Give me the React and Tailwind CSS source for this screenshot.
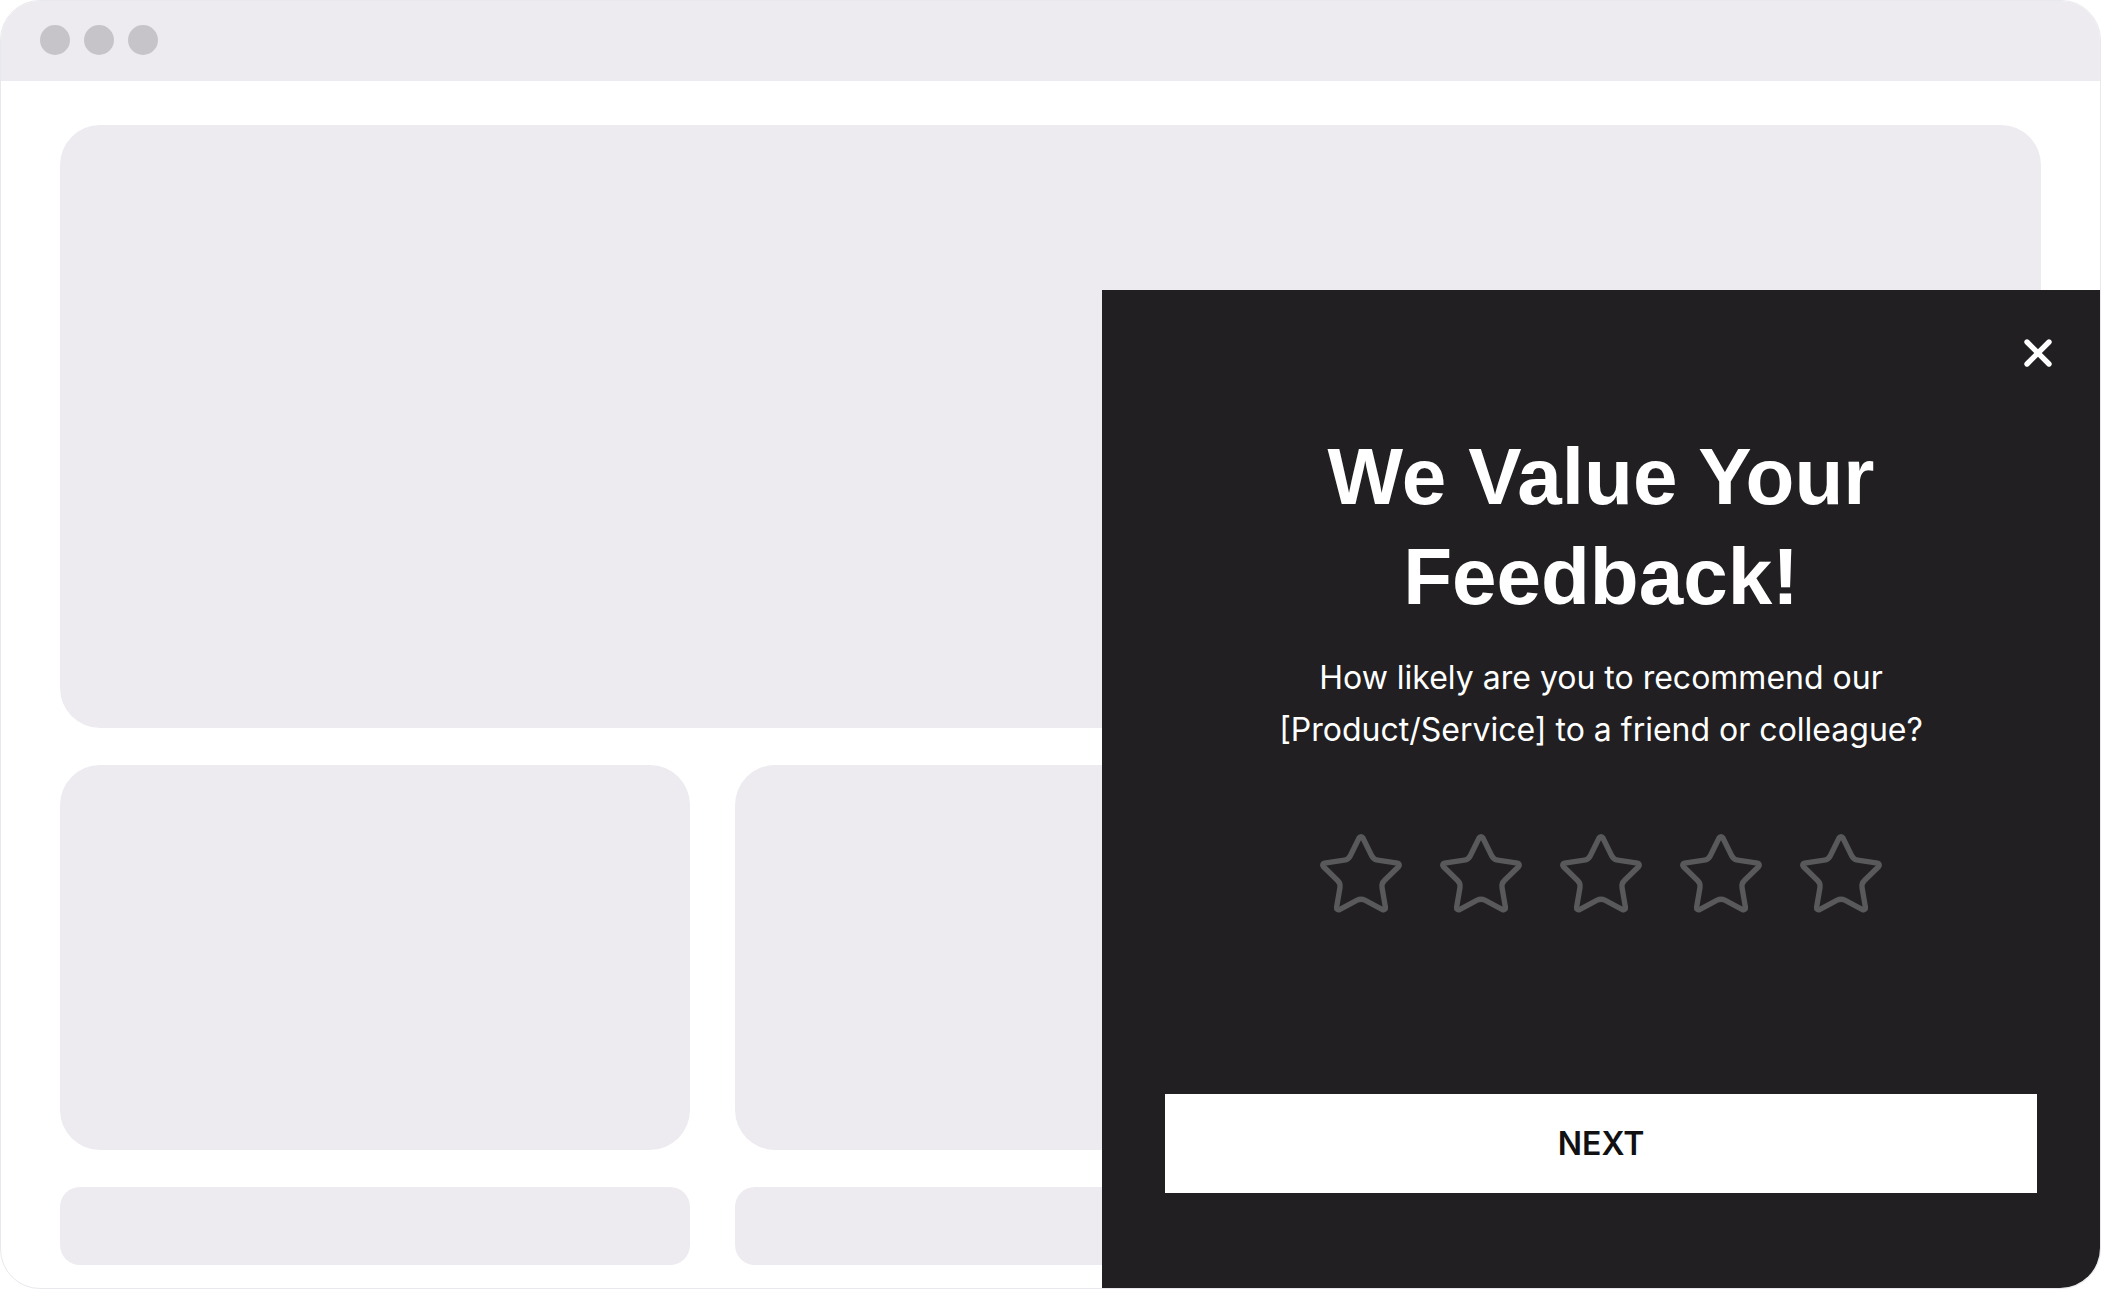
import React from 'react';
import { Star, X } from 'lucide-react';

const Popup = () => {
  const stars = [1, 2, 3, 4, 5];

  return (
    <div className="absolute left-[1102px] top-[290px] w-[998px] h-[998px] bg-[#211f22] rounded-br-[40px] flex flex-col items-center">
      {/* Close */}
      <button className="absolute top-[41px] right-[40px] text-white">
        <X size={44} strokeWidth={2.9} />
      </button>

      <h1 className="pt-[137px] text-center text-white font-bold text-[80px] leading-[100px] font-['Liberation_Sans',Arial,sans-serif]">
        We Value Your
        <br />
        Feedback!
      </h1>

      <p className="mt-[25px] text-center text-white text-[32px] leading-[52px] font-['Inter',sans-serif]">
        How likely are you to recommend our
        <br />
        [Product/Service] to a friend or colleague?
      </p>

      <div className="mt-[73px] flex items-center gap-[28px]">
        {stars.map((s) => (
          <Star key={s} size={92} strokeWidth={1.4} className="text-[#59585b]" />
        ))}
      </div>

      <button className="mt-auto mb-[95px] w-[872px] h-[99px] bg-white text-[#111111] text-[32px] font-semibold font-['Inter',sans-serif] flex items-center justify-center">
        NEXT
      </button>
    </div>
  );
};

export default function App() {
  return (
    <div className="relative w-[2102px] h-[1290px] bg-white overflow-hidden">
      {/* Browser frame */}
      <div className="w-[2101px] h-[1289px] rounded-[40px] border border-[#e9e8ec] overflow-hidden flex flex-col">
        <div className="h-[80px] shrink-0 bg-[#edebf0] flex items-center gap-[14px] pl-[39px] pb-[2px]">
          <div className="w-[30px] h-[30px] rounded-full bg-[#c6c4c9]" />
          <div className="w-[30px] h-[30px] rounded-full bg-[#c6c4c9]" />
          <div className="w-[30px] h-[30px] rounded-full bg-[#c6c4c9]" />
        </div>

        <div className="px-[59px] pt-[44px] flex flex-col gap-[37px]">
          <div className="h-[603px] rounded-[40px] bg-[#edebf0]" />
          <div className="grid grid-cols-3 gap-x-[45px] gap-y-[37px]">
            <div className="h-[385px] rounded-[40px] bg-[#edebf0]" />
            <div className="h-[385px] rounded-[40px] bg-[#edebf0]" />
            <div className="h-[385px] rounded-[40px] bg-[#edebf0]" />
            <div className="h-[78px] rounded-[20px] bg-[#edebf0]" />
            <div className="h-[78px] rounded-[20px] bg-[#edebf0]" />
            <div className="h-[78px] rounded-[20px] bg-[#edebf0]" />
          </div>
        </div>
      </div>

      <Popup />
    </div>
  );
}
